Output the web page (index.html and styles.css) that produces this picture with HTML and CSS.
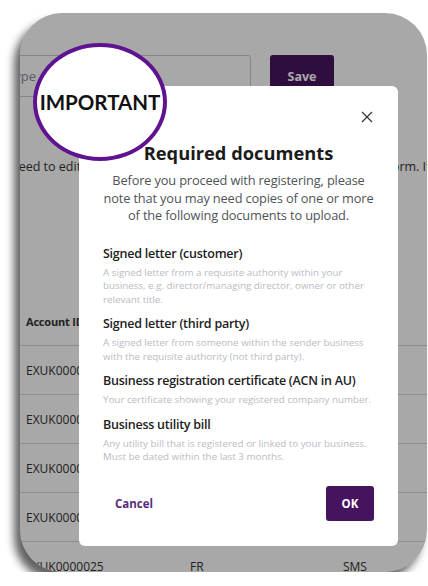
FILE: index.html
```html
<!DOCTYPE html>
<html lang="en">
<head>
  <meta charset="UTF-8">
  <meta name="viewport" content="width=device-width, initial-scale=1.0">
  <title>Required documents</title>
  <link rel="stylesheet" href="styles.css">
</head>
<body>
  <div class="frame">
    <div class="page">
      <div class="form-row">
        <div class="field">Type</div>
        <button class="btn-save">Save</button>
      </div>
      <div class="note">
        <span>need to edit your account details</span>
        <span>in the form. If you</span>
      </div>

      <div class="table">
        <div class="tr th">
          <div class="td">Account ID</div>
          <div class="td">Country</div>
          <div class="td">Method</div>
        </div>
        <div class="tr">
          <div class="td">EXUK0000021</div>
          <div class="td">GB</div>
          <div class="td">SMS</div>
        </div>
        <div class="tr">
          <div class="td">EXUK0000022</div>
          <div class="td">GB</div>
          <div class="td">SMS</div>
        </div>
        <div class="tr">
          <div class="td">EXUK0000023</div>
          <div class="td">GB</div>
          <div class="td">SMS</div>
        </div>
        <div class="tr">
          <div class="td">EXUK0000024</div>
          <div class="td">GB</div>
          <div class="td">SMS</div>
        </div>
        <div class="tr">
          <div class="td">EXUK0000025</div>
          <div class="td">FR</div>
          <div class="td">SMS</div>
        </div>
      </div>
    </div>

    <div class="backdrop"></div>

    <div class="modal">
      <span class="close">
        <svg width="12" height="12" viewBox="0 0 12 12"><path d="M1 1 11 11M11 1 1 11" stroke="#333" stroke-width="1.2" fill="none"/></svg>
      </span>
      <h2 class="modal-title">Required documents</h2>
      <p class="modal-intro">Before you proceed with registering, please note that you may need copies of one or more of the following documents to upload.</p>

      <div class="doc">
        <h3>Signed letter (customer)</h3>
        <p>A signed letter from a requisite authority within your business, e.g. director/managing director, owner or other relevant title.</p>
      </div>
      <div class="doc">
        <h3>Signed letter (third party)</h3>
        <p>A signed letter from someone within the sender business with the requisite authority (not third party).</p>
      </div>
      <div class="doc">
        <h3>Business registration certificate (ACN in AU)</h3>
        <p>Your certificate showing your registered company number.</p>
      </div>
      <div class="doc">
        <h3>Business utility bill</h3>
        <p>Any utility bill that is registered or linked to your business. Must be dated within the last 3 months.</p>
      </div>

      <div class="modal-actions">
        <button class="btn-cancel">Cancel</button>
        <button class="btn-ok">OK</button>
      </div>
    </div>

    <div class="badge">IMPORTANT</div>
  </div>
</body>
</html>
```

FILE: styles.css
```css
body {
    margin: 0;
    background: #fff;
    font-family: "Open Sans", "Liberation Sans", sans-serif;
}

.frame {
    position: relative;
    width: 407px;
    height: 559px;
    margin: 13px 0 0 20px;
    background: #fff;
    border-radius: 42px;
    overflow: hidden;
    box-shadow: -6px 8px 9px rgba(0, 0, 0, .62);
}

/* page behind the dialog */
.page {
    padding-top: 42px;
    color: #333;
    font-size: 12px;
}
.form-row {
    display: flex;
    align-items: center;
    gap: 19px;
    margin-left: -20px;
}
.field {
    width: 251px;
    height: 42px;
    border: 1px solid #c9ccd0;
    border-radius: 3px;
    box-sizing: border-box;
    padding-left: 6px;
    line-height: 40px;
    color: #8a9099;
    font-size: 13px;
}
.btn-save {
    width: 64px;
    height: 42px;
    border: none;
    border-radius: 3px;
    background: #4a1460;
    color: #fff;
    font-family: inherit;
    font-weight: 700;
    font-size: 12.5px;
}
.note {
    display: flex;
    justify-content: space-between;
    margin: 61px -28px 0 -9px;
    white-space: nowrap;
    font-size: 12.5px;
    color: #333;
}

.table {
    margin-top: 123px;
}
.tr {
    display: flex;
    height: 48px;
    align-items: center;
    border-bottom: 1px solid #d7dade;
    padding-left: 6px;
}
.tr.th {
    height: 47px;
    font-size: 11px;
    letter-spacing: -0.2px;
    font-weight: 700;
    border-bottom-color: #d0d3d8;
}
.td {
    white-space: nowrap;
}
.td:nth-child(1) { width: 164px; }
.td:nth-child(2) { width: 153px; }

.backdrop {
    position: absolute;
    inset: 0;
    background: rgba(0, 0, 0, .34);
}

/* dialog */
.modal {
    position: absolute;
    left: 59px;
    top: 73px;
    width: 319px;
    height: 460px;
    box-sizing: border-box;
    padding: 54px 24px 0;
    background: #fff;
    border-radius: 6px;
}
.close {
    position: absolute;
    top: 25px;
    right: 25px;
    line-height: 0;
}
.modal-title {
    margin: 0;
    text-align: center;
    font-size: 18.3px;
    font-weight: 700;
    color: #1b1b1b;
    line-height: 26px;
}
.modal-intro {
    margin: 6px 0 0;
    text-align: center;
    font-size: 12.8px;
    letter-spacing: -0.15px;
    line-height: 17.5px;
    color: #505458;
}

.doc {
    margin-top: 8px;
}
.doc:first-of-type {
    margin-top: 19px;
}
.doc h3 {
    margin: 0;
    font-size: 12.5px;
    letter-spacing: -0.25px;
    font-weight: 600;
    color: #222;
    line-height: 20px;
}
.doc p {
    margin: 2px 0 0;
    font-size: 9.8px;
    line-height: 13.5px;
    color: #b9bcc1;
}

.modal-actions {
    display: flex;
    justify-content: space-between;
    align-items: center;
    margin-top: 22px;
}
.btn-cancel {
    border: none;
    background: none;
    padding: 0 12px;
    font-family: inherit;
    font-size: 11.5px;
    font-weight: 700;
    color: #5a2a7c;
}
.btn-ok {
    width: 48px;
    height: 35px;
    border: none;
    border-radius: 3px;
    background: #46135f;
    color: #fff;
    font-family: inherit;
    font-weight: 700;
    font-size: 11.5px;
}

.badge {
    position: absolute;
    left: 13px;
    top: 30px;
    width: 134px;
    height: 118px;
    box-sizing: border-box;
    border: 4px solid #5f1390;
    border-radius: 50%;
    background: #fff;
    display: flex;
    align-items: center;
    justify-content: center;
    font-family: Lato, "Liberation Sans", sans-serif;
    font-weight: 700;
    font-size: 20.5px;
    color: #111;
}
```
